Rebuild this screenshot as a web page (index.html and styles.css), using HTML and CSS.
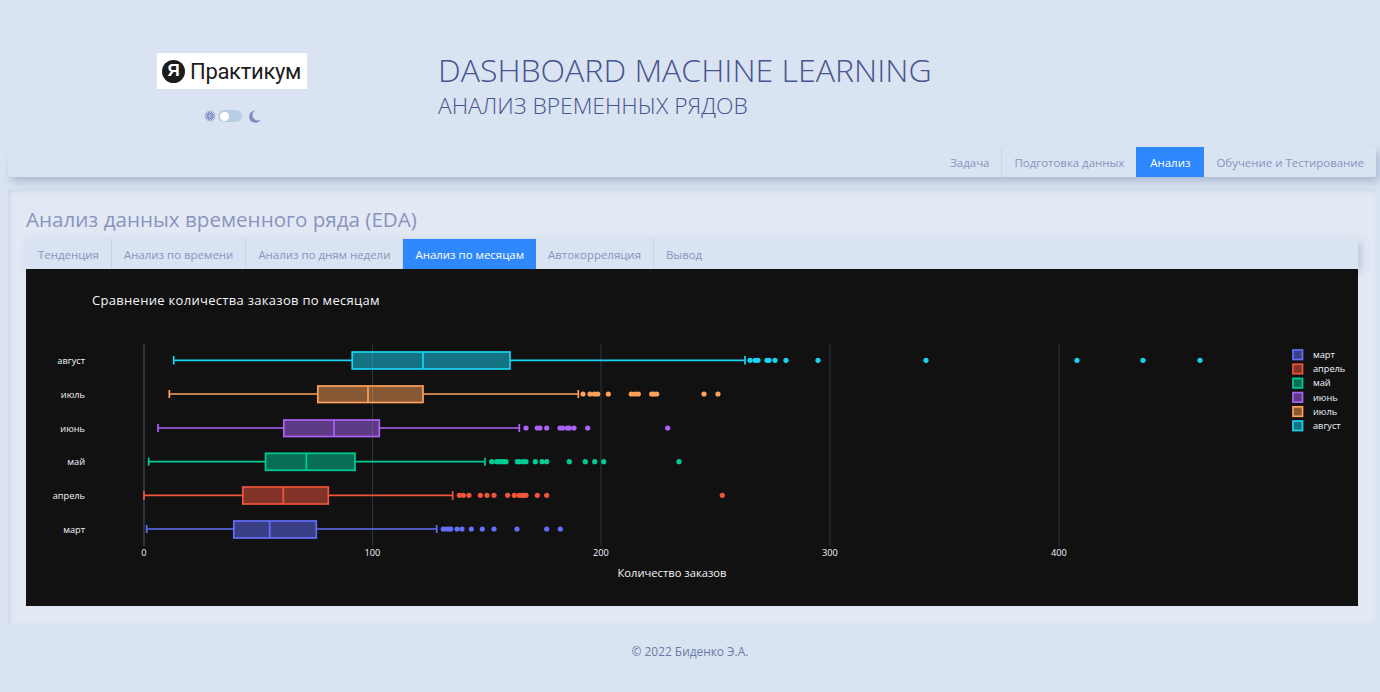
FILE: index.html
```html
<!DOCTYPE html>
<html lang="ru">
<head>
    <meta charset="UTF-8" />
    <title>Dashboard Machine Learning</title>
    <link rel="stylesheet" href="styles.css">
</head>
<body>

<header class="top">
    <div class="brand">
        <div class="logo">
            <span class="logo-mark">Я</span>
            <span class="logo-text">Практикум</span>
        </div>
        <div class="theme-switch">
            <svg class="theme-icon" viewBox="0 0 14 14">
                <circle cx="7" cy="7" r="3.4" fill="#7f8cc4"/>
                <g stroke="#7f8cc4" stroke-width="1.1">
                    <path d="M7 .5V13.5M.5 7H13.5M2.4 2.4l9.2 9.2M2.4 11.6l9.2-9.2M4.5 1.2l5 11.6M9.5 1.2l-5 11.6M1.2 4.5l11.6 5M1.2 9.5l11.6-5"/>
                </g>
                <circle cx="7" cy="7" r="2.2" fill="#a9b3dc"/>
            </svg>
            <span class="toggle"><span class="toggle-knob"></span></span>
            <svg class="theme-icon moon" viewBox="0 0 14 14">
                <path d="M7.6.6A6.6 6.6 0 1 0 13.6 10.4 5.6 5.6 0 0 1 7.6.6Z" fill="#7f8cc4"/>
            </svg>
        </div>
    </div>
    <div class="headline">
        <h1>DASHBOARD MACHINE LEARNING</h1>
        <h2>АНАЛИЗ ВРЕМЕННЫХ РЯДОВ</h2>
    </div>
</header>

<nav class="navbar">
    <a class="nav-item">Задача</a>
    <a class="nav-item">Подготовка данных</a>
    <a class="nav-item active">Анализ</a>
    <a class="nav-item">Обучение и Тестирование</a>
</nav>

<main class="card">
    <h3>Анализ данных временного ряда (EDA)</h3>
    <div class="tabs">
        <a class="tab">Тенденция</a>
        <a class="tab">Анализ по времени</a>
        <a class="tab">Анализ по дням недели</a>
        <a class="tab active">Анализ по месяцам</a>
        <a class="tab">Автокорреляция</a>
        <a class="tab">Вывод</a>
    </div>

    <!-- координаты в viewBox совпадают с координатами страницы -->
    <svg class="plot" viewBox="26 269 1332 337">
        <text class="plot-title" x="92" y="305">Сравнение количества заказов по месяцам</text>

        <g class="grid">
            <line x1="372.5" y1="344" x2="372.5" y2="546"/>
            <line x1="601" y1="344" x2="601" y2="546"/>
            <line x1="830" y1="344" x2="830" y2="546"/>
            <line x1="1059" y1="344" x2="1059" y2="546"/>
        </g>
        <line class="zero" x1="144" y1="344" x2="144" y2="546"/>

        <g class="ylabels">
            <text x="85" y="364">август</text>
            <text x="85" y="398">июль</text>
            <text x="85" y="432">июнь</text>
            <text x="85" y="465">май</text>
            <text x="85" y="499">апрель</text>
            <text x="85" y="533">март</text>
        </g>

        <g class="xlabels">
            <text x="144" y="556">0</text>
            <text x="372.5" y="556">100</text>
            <text x="601" y="556">200</text>
            <text x="830" y="556">300</text>
            <text x="1059" y="556">400</text>
        </g>
        <text class="xtitle" x="672" y="577">Количество заказов</text>

        <!-- март -->
        <g class="series s-mar">
            <path class="whisker" d="M146.7 525V533M146.7 529H233.3M316.3 529H436.7M436.7 525V533"/>
            <rect class="box" x="233.8" y="521" width="82.5" height="17"/>
            <line class="median" x1="269.7" y1="521" x2="269.7" y2="538"/>
            <circle cx="443.3" cy="529" r="2.6"/><circle cx="446.7" cy="529" r="2.6"/><circle cx="449.3" cy="529" r="2.6"/><circle cx="450.7" cy="529" r="2.6"/><circle cx="457" cy="529" r="2.6"/><circle cx="462" cy="529" r="2.6"/><circle cx="471.3" cy="529" r="2.6"/><circle cx="482.3" cy="529" r="2.6"/><circle cx="494" cy="529" r="2.6"/><circle cx="517" cy="529" r="2.6"/><circle cx="546.7" cy="529" r="2.6"/><circle cx="560.3" cy="529" r="2.6"/>
        </g>
        <!-- апрель -->
        <g class="series s-apr">
            <path class="whisker" d="M144 491V500M144 495.3H242.3M328.3 495.3H452.7M452.7 491V500"/>
            <rect class="box" x="242.8" y="487" width="85.5" height="17"/>
            <line class="median" x1="283.3" y1="487" x2="283.3" y2="504"/>
            <circle cx="459.3" cy="495.3" r="2.6"/><circle cx="463.3" cy="495.3" r="2.6"/><circle cx="469" cy="495.3" r="2.6"/><circle cx="480.3" cy="495.3" r="2.6"/><circle cx="487" cy="495.3" r="2.6"/><circle cx="494" cy="495.3" r="2.6"/><circle cx="507.7" cy="495.3" r="2.6"/><circle cx="514.3" cy="495.3" r="2.6"/><circle cx="519" cy="495.3" r="2.6"/><circle cx="521.7" cy="495.3" r="2.6"/><circle cx="524" cy="495.3" r="2.6"/><circle cx="526" cy="495.3" r="2.6"/><circle cx="537.3" cy="495.3" r="2.6"/><circle cx="546.7" cy="495.3" r="2.6"/><circle cx="722.3" cy="495.3" r="2.6"/>
        </g>
        <!-- май -->
        <g class="series s-may">
            <path class="whisker" d="M148.7 457.7V465.7M148.7 461.7H265M355 461.7H485M485 457.7V465.7"/>
            <rect class="box" x="265.5" y="453.3" width="89.5" height="17"/>
            <line class="median" x1="306.3" y1="453.3" x2="306.3" y2="470.3"/>
            <circle cx="491.7" cy="461.7" r="2.6"/><circle cx="496.7" cy="461.7" r="2.6"/><circle cx="499" cy="461.7" r="2.6"/><circle cx="501.3" cy="461.7" r="2.6"/><circle cx="504" cy="461.7" r="2.6"/><circle cx="506" cy="461.7" r="2.6"/><circle cx="517.3" cy="461.7" r="2.6"/><circle cx="519.3" cy="461.7" r="2.6"/><circle cx="523.3" cy="461.7" r="2.6"/><circle cx="526" cy="461.7" r="2.6"/><circle cx="535.3" cy="461.7" r="2.6"/><circle cx="542" cy="461.7" r="2.6"/><circle cx="546.7" cy="461.7" r="2.6"/><circle cx="569.3" cy="461.7" r="2.6"/><circle cx="585.3" cy="461.7" r="2.6"/><circle cx="594.7" cy="461.7" r="2.6"/><circle cx="603.7" cy="461.7" r="2.6"/><circle cx="679" cy="461.7" r="2.6"/>
        </g>
        <!-- июнь -->
        <g class="series s-jun">
            <path class="whisker" d="M158 424V432M158 428H283.3M379.3 428H519.3M519.3 424V432"/>
            <rect class="box" x="283.8" y="420" width="95.5" height="16.5"/>
            <line class="median" x1="334" y1="420" x2="334" y2="436.5"/>
            <circle cx="526" cy="428" r="2.6"/><circle cx="537.3" cy="428" r="2.6"/><circle cx="540" cy="428" r="2.6"/><circle cx="546.7" cy="428" r="2.6"/><circle cx="560" cy="428" r="2.6"/><circle cx="562.7" cy="428" r="2.6"/><circle cx="567.3" cy="428" r="2.6"/><circle cx="569.3" cy="428" r="2.6"/><circle cx="574" cy="428" r="2.6"/><circle cx="587.7" cy="428" r="2.6"/><circle cx="667.7" cy="428" r="2.6"/>
        </g>
        <!-- июль -->
        <g class="series s-jul">
            <path class="whisker" d="M169.3 390V398M169.3 394H317.3M423 394H578.3M578.3 390V398"/>
            <rect class="box" x="317.8" y="386" width="105.2" height="16.5"/>
            <line class="median" x1="368" y1="386" x2="368" y2="402.5"/>
            <circle cx="583" cy="394" r="2.6"/><circle cx="590" cy="394" r="2.6"/><circle cx="594.3" cy="394" r="2.6"/><circle cx="597.7" cy="394" r="2.6"/><circle cx="608.3" cy="394" r="2.6"/><circle cx="631.3" cy="394" r="2.6"/><circle cx="635" cy="394" r="2.6"/><circle cx="638.3" cy="394" r="2.6"/><circle cx="651.7" cy="394" r="2.6"/><circle cx="654" cy="394" r="2.6"/><circle cx="656.7" cy="394" r="2.6"/><circle cx="704" cy="394" r="2.6"/><circle cx="718" cy="394" r="2.6"/>
        </g>
        <!-- август -->
        <g class="series s-aug">
            <path class="whisker" d="M173.7 356V364.5M173.7 360.3H351.7M510 360.3H745M745 356V364.5"/>
            <rect class="box" x="352.2" y="352" width="157.8" height="17"/>
            <line class="median" x1="423" y1="352" x2="423" y2="369"/>
            <circle cx="750" cy="360.3" r="2.6"/><circle cx="755" cy="360.3" r="2.6"/><circle cx="758" cy="360.3" r="2.6"/><circle cx="767" cy="360.3" r="2.6"/><circle cx="769" cy="360.3" r="2.6"/><circle cx="775" cy="360.3" r="2.6"/><circle cx="786" cy="360.3" r="2.6"/><circle cx="818" cy="360.3" r="2.6"/><circle cx="926" cy="360.3" r="2.6"/><circle cx="1077" cy="360.3" r="2.6"/><circle cx="1143" cy="360.3" r="2.6"/><circle cx="1200" cy="360.3" r="2.6"/>
        </g>

        <!-- легенда -->
        <g class="legend">
            <rect class="box s-mar" x="1293" y="350" width="9.5" height="9.5"/>
            <rect class="box s-apr" x="1293" y="364.2" width="9.5" height="9.5"/>
            <rect class="box s-may" x="1293" y="378.4" width="9.5" height="9.5"/>
            <rect class="box s-jun" x="1293" y="392.6" width="9.5" height="9.5"/>
            <rect class="box s-jul" x="1293" y="406.8" width="9.5" height="9.5"/>
            <rect class="box s-aug" x="1293" y="421" width="9.5" height="9.5"/>
            <text x="1313" y="358">март</text>
            <text x="1313" y="372">апрель</text>
            <text x="1313" y="386">май</text>
            <text x="1313" y="401">июнь</text>
            <text x="1313" y="415">июль</text>
            <text x="1313" y="429">август</text>
        </g>
    </svg>
</main>

<footer class="footer">© 2022 Биденко Э.А.</footer>

</body>
</html>
```

FILE: styles.css
```css
html, body {
    margin: 0;
    height: 100%;
}

body {
    background-color: #d9e3f1;
    font-family: "Open Sans", "Noto Sans", sans-serif;
    color: #8a94bf;
    overflow: hidden;
}

/* Шапка */
.top {
    display: flex;
    height: 140px;
    padding-top: 53px;
    box-sizing: border-box;
}

.brand {
    width: 464px;
    display: flex;
    flex-direction: column;
    align-items: center;
}

.logo {
    display: flex;
    align-items: center;
    gap: 5px;
    width: 150px;
    height: 36px;
    padding-left: 5px;
    box-sizing: border-box;
    background: #fff;
}

.logo-mark {
    display: flex;
    align-items: center;
    justify-content: center;
    width: 23px;
    height: 23px;
    border-radius: 50%;
    background: #1c1c1c;
    color: #fff;
    font-family: "Liberation Sans", sans-serif;
    font-weight: bold;
    font-size: 17px;
}

.logo-text {
    font-family: Roboto, sans-serif;
    font-weight: 400;
    font-size: 22px;
    letter-spacing: -0.3px;
    color: #1c1c1c;
}

.theme-switch {
    display: flex;
    align-items: center;
    gap: 2px;
    margin-top: 20px;
    height: 14px;
}

.theme-icon {
    width: 12px;
    height: 12px;
}

.moon {
    width: 13px;
    height: 13px;
    margin-left: 4px;
}

.toggle {
    width: 24px;
    height: 12px;
    border-radius: 6px;
    background: #b9cde3;
    display: flex;
    align-items: center;
}

.toggle-knob {
    width: 9px;
    height: 9px;
    margin-left: 2px;
    border-radius: 50%;
    background: #fff;
}

.headline {
    margin-left: -26px;
}

h1 {
    margin: 0;
    margin-top: -2px;
    font-size: 32.1px;
    line-height: 38px;
    font-weight: 300;
    color: #46548f;
}

h2 {
    margin: 0;
    margin-top: 3px;
    font-size: 22.8px;
    line-height: 28px;
    font-weight: 300;
    color: #46548f;
}

/* Навигация */
.navbar {
    display: flex;
    justify-content: flex-end;
    height: 30px;
    margin: 7px 4px 0 8px;
    background: #d9e3f1;
    border-radius: 2px;
    box-shadow: 3px 4px 8px rgba(120, 140, 180, 0.5), -3px -4px 8px rgba(255, 255, 255, 0.25);
}

.nav-item {
    display: flex;
    align-items: center;
    padding: 0 12px;
    font-size: 11.45px;
    border-left: 1px solid #c8d6e8;
}

.nav-item:first-child {
    border-left: none;
}

.nav-item.active {
    padding: 0 14px;
    background: #2f88fb;
    color: #fff;
    border-left: none;
}

.nav-item.active + .nav-item {
    border-left: none;
}

/* Карточка */
.card {
    margin: 12px 4px 0 8px;
    height: 435px;
    padding: 18px 18px 0 18px;
    box-sizing: border-box;
    background: #e2e9f5;
    border-radius: 2px;
    box-shadow: inset 2px 2px 4px rgba(150, 165, 195, 0.3);
}

h3 {
    margin: 0;
    font-size: 20.6px;
    line-height: 24px;
    font-weight: 400;
    color: #8a94bf;
}

.tabs {
    display: flex;
    height: 30px;
    margin-top: 8px;
    background: #d9e3f1;
    box-shadow: 3px 3px 8px rgba(120, 140, 180, 0.4);
}

.tab {
    display: flex;
    align-items: center;
    padding: 0 12px;
    font-size: 11.45px;
    border-right: 1px solid #c8d6e8;
}

.tab.active {
    background: #2f88fb;
    color: #fff;
    border-right: none;
}

.tab:last-child {
    border-right: none;
}

/* График */
.plot {
    display: block;
    width: 1332px;
    height: 337px;
    background: #111111;
    font-family: "Open Sans", sans-serif;
}

.plot text {
    fill: #f2f5fa;
    font-size: 9.2px;
}

.plot .plot-title {
    font-size: 13px;
    letter-spacing: 0.3px;
}

.plot .xtitle {
    font-size: 11.2px;
    text-anchor: middle;
}

.ylabels text {
    text-anchor: end;
}

.xlabels text {
    text-anchor: middle;
}

.grid line {
    stroke: #283442;
    stroke-width: 1;
}

.zero {
    stroke: #283442;
    stroke-width: 2;
}

.whisker {
    fill: none;
    stroke-width: 1.7;
}

.median {
    stroke-width: 1.7;
}

.s-mar { color: #636efa; }
.s-apr { color: #ef553b; }
.s-may { color: #00cc96; }
.s-jun { color: #ab63fa; }
.s-jul { color: #ffa15a; }
.s-aug { color: #19d3f3; }

.series circle {
    fill: currentColor;
}

.series .whisker,
.series .median,
.box {
    stroke: currentColor;
}

.box {
    fill: currentColor;
    fill-opacity: 0.5;
    stroke-width: 1.7;
}

.footer {
    text-align: center;
    margin-top: 19px;
    font-size: 11.9px;
    color: #6e7aa8;
}
```
